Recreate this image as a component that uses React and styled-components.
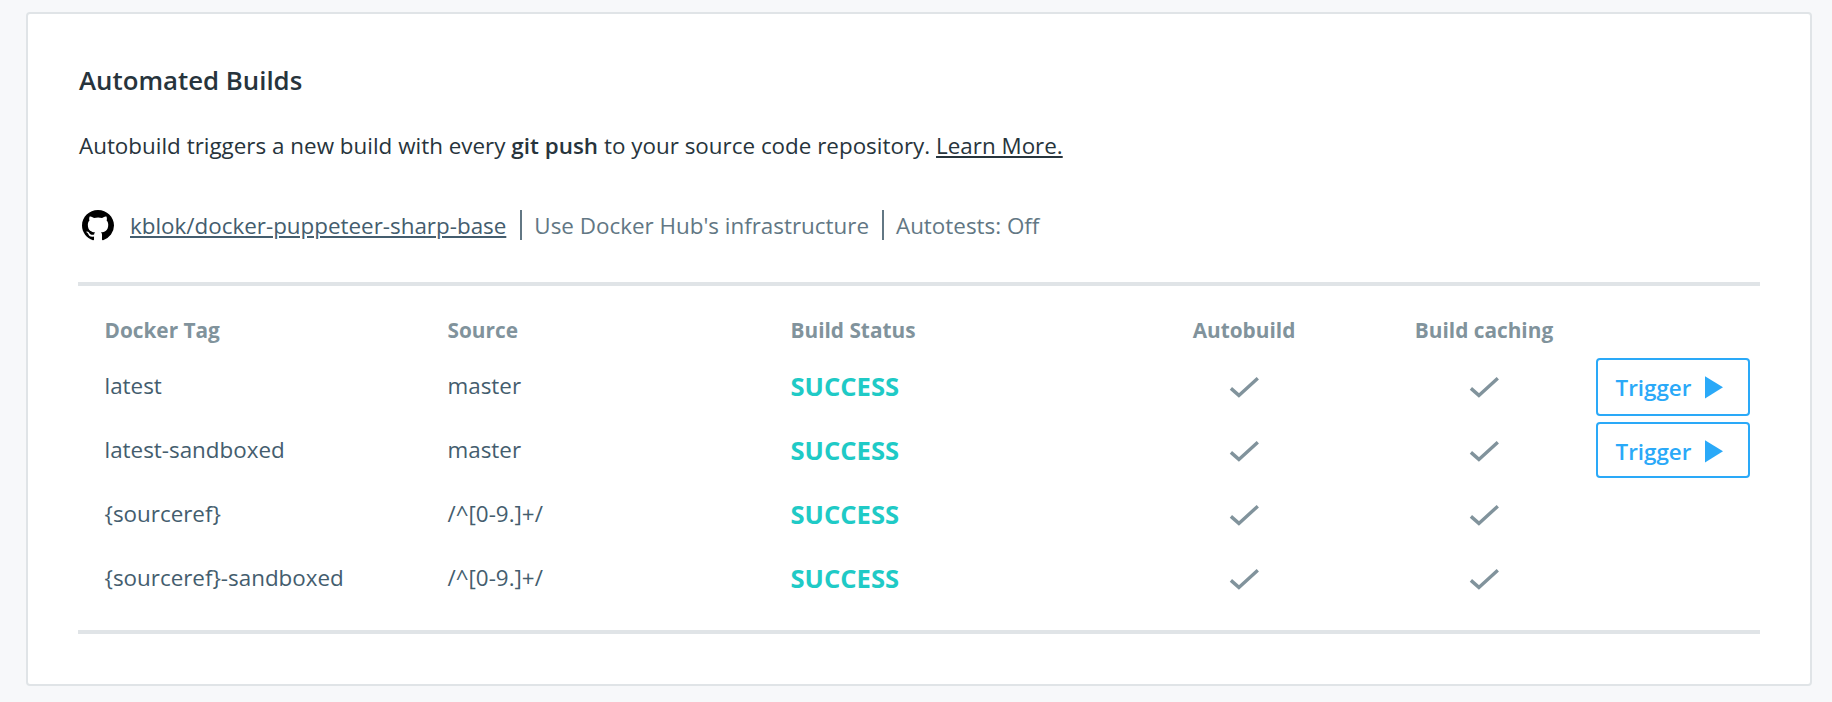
import React from "react";
import styled, { createGlobalStyle } from "styled-components";

const GlobalStyle = createGlobalStyle`
  *, *::before, *::after { box-sizing: border-box; }
  body {
    margin: 0;
    background: #f7f8fa;
    font-family: "Open Sans", "Noto Sans", sans-serif;
    color: #27343c;
  }
`;

const Page = styled.main`
  height: 702px;
  padding: 12px 20px 16px 26px;
`;

const Card = styled.section`
  height: 674px;
  padding: 42px 50px 0;
  background: #fff;
  border: 2px solid #e0e4e7;
  border-radius: 4px;
`;

const Title = styled.h2`
  margin: 0;
  padding-left: 1px;
  font-size: 25.8px;
  font-weight: 600;
  line-height: 48px;
`;

const Intro = styled.p`
  margin: 22px 0 0;
  padding-left: 1px;
  font-size: 22.4px;
  line-height: 40px;
  word-spacing: 0.06px;
  strong { font-weight: 600; }
`;

const Link = styled.a`
  color: ${(p) => p.$color || "inherit"};
  text-decoration: underline;
  cursor: pointer;
`;

const SourceBar = styled.div`
  display: flex;
  align-items: center;
  height: 30px;
  margin: 44px 0 42px;
  padding-left: 4px;
  font-size: 22.4px;
  color: #627784;
`;

const SourceItem = styled.span`
  height: 30px;
  padding: 0 14px 0 16px;
  line-height: 32px;
  white-space: nowrap;
  & + & {
    padding: 0 13px 0 12px;
    border-left: 2px solid #627784;
  }
`;

const Builds = styled.div`
  height: 352px;
  border: solid #e0e4e7;
  border-width: 4px 0;
`;

const Row = styled.div`
  display: grid;
  grid-template-columns: 343px 343px 323.5px 260px 220px 156px;
  height: ${(p) => (p.$head ? 70 : 64)}px;
  padding-left: 26.5px;
`;

const HeadCell = styled.div`
  font-size: 20.8px;
  font-weight: 700;
  line-height: 88px;
  color: #81939c;
  text-align: ${(p) => (p.$center ? "center" : "left")};
`;

const Cell = styled.div`
  font-size: 22.4px;
  line-height: 59px;
  color: #445d6e;
`;

const Status = styled(Cell)`
  font-size: 25.6px;
  font-weight: 700;
  line-height: 62px;
  color: #1fcac6;
`;

const CheckCell = styled.div`
  display: flex;
  justify-content: center;
  padding-top: 20px;
`;

const TriggerButton = styled.button`
  display: flex;
  align-items: flex-start;
  justify-self: end;
  gap: 13.5px;
  width: 154px;
  height: ${(p) => p.$height}px;
  margin: 2px 0 0;
  padding: 0 0 0 17.5px;
  background: #fff;
  border: 2px solid #2aa9f8;
  border-radius: 4px;
  font: 600 22.4px/55px "Open Sans", sans-serif;
  color: #2aa9f8;
  svg { margin-top: 16px; }
`;

const GithubMark = () => (
  <svg width="32" height="31" viewBox="0 0 16 16" preserveAspectRatio="none" fill="#000" aria-hidden="true">
    <path d="M8 0C3.58 0 0 3.58 0 8c0 3.54 2.29 6.53 5.47 7.59.4.07.55-.17.55-.38 0-.19-.01-.82-.01-1.49-2.01.37-2.53-.49-2.69-.94-.09-.23-.48-.94-.82-1.13-.28-.15-.68-.52-.01-.53.63-.01 1.08.58 1.23.82.72 1.21 1.87.87 2.33.66.07-.52.28-.87.51-1.07-1.78-.2-3.64-.89-3.64-3.95 0-.87.31-1.59.82-2.15-.08-.2-.36-1.02.08-2.12 0 0 .67-.21 2.2.82.64-.18 1.32-.27 2-.27s1.36.09 2 .27c1.53-1.04 2.2-.82 2.2-.82.44 1.1.16 1.92.08 2.12.51.56.82 1.27.82 2.15 0 3.07-1.87 3.75-3.65 3.95.29.25.54.73.54 1.48 0 1.07-.01 1.93-.01 2.2 0 .21.15.46.55.38A8.01 8.01 0 0 0 16 8c0-4.42-3.58-8-8-8z" />
  </svg>
);

const Check = () => (
  <svg width="30" height="23" viewBox="0 0 30 23" fill="none" stroke="#81939c" strokeWidth="3.4" aria-hidden="true">
    <path d="M1.9 12.4L9.9 19.4L28.8 2.2" />
  </svg>
);

const Play = () => (
  <svg width="18" height="23" viewBox="0 0 18 23" fill="#2aa9f8" aria-hidden="true">
    <path d="M0 0.2L18 11.2L0 22.4Z" />
  </svg>
);

const builds = [
  { tag: "latest", source: "master", button: 58 },
  { tag: "latest-sandboxed", source: "master", button: 56 },
  { tag: "{sourceref}", source: "/^[0-9.]+/" },
  { tag: "{sourceref}-sandboxed", source: "/^[0-9.]+/" },
];

export default function App() {
  return (
    <Page>
      <GlobalStyle />
      <Card>
        <Title>Automated Builds</Title>
        <Intro>
          Autobuild triggers a new build with every <strong>git push</strong> to your source code repository.{" "}
          <Link>Learn More.</Link>
        </Intro>
        <SourceBar>
          <GithubMark />
          <SourceItem>
            <Link $color="#445d6e">kblok/docker-puppeteer-sharp-base</Link>
          </SourceItem>
          <SourceItem>Use Docker Hub's infrastructure</SourceItem>
          <SourceItem>Autotests: Off</SourceItem>
        </SourceBar>
        <Builds>
          <Row $head>
            <HeadCell>Docker Tag</HeadCell>
            <HeadCell>Source</HeadCell>
            <HeadCell>Build Status</HeadCell>
            <HeadCell $center>Autobuild</HeadCell>
            <HeadCell $center>Build caching</HeadCell>
          </Row>
          {builds.map((b) => (
            <Row key={b.tag}>
              <Cell>{b.tag}</Cell>
              <Cell>{b.source}</Cell>
              <Status>SUCCESS</Status>
              <CheckCell><Check /></CheckCell>
              <CheckCell><Check /></CheckCell>
              {b.button && (
                <TriggerButton $height={b.button}>
                  Trigger
                  <Play />
                </TriggerButton>
              )}
            </Row>
          ))}
        </Builds>
      </Card>
    </Page>
  );
}
